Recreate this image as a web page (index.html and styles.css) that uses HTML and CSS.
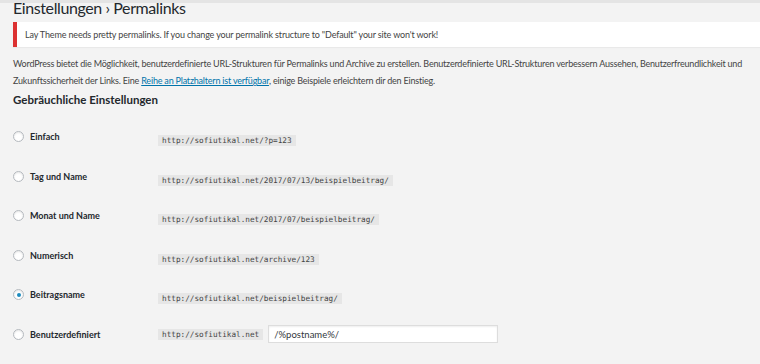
FILE: index.html
```html
<!DOCTYPE html>
<html lang="de">
<head>
    <meta charset="UTF-8">
    <title>Permalinks</title>
    <link rel="stylesheet" href="styles.css">
</head>
<body>
    <div class="topbar"></div>
    <div class="wrap">
        <h1>Einstellungen › Permalinks</h1>

        <div class="notice">Lay Theme needs pretty permalinks. If you change your permalink structure to "Default" your site won't work!</div>

        <p class="intro">WordPress bietet die Möglichkeit, benutzerdefinierte URL-Strukturen für Permalinks und Archive zu erstellen. Benutzerdefinierte URL-Strukturen verbessern Aussehen, Benutzerfreundlichkeit und Zukunftssicherheit der Links. Eine <a href="#">Reihe an Platzhaltern ist verfügbar</a>, einige Beispiele erleichtern dir den Einstieg.</p>

        <h2>Gebräuchliche Einstellungen</h2>

        <!-- Permalink-Optionen -->
        <div class="options">
            <div class="row">
                <label class="choice"><span class="radio"></span>Einfach</label>
                <div><code>http://sofiutikal.net/?p=123</code></div>
            </div>
            <div class="row">
                <label class="choice"><span class="radio"></span>Tag und Name</label>
                <div><code>http://sofiutikal.net/2017/07/13/beispielbeitrag/</code></div>
            </div>
            <div class="row">
                <label class="choice"><span class="radio"></span>Monat und Name</label>
                <div><code>http://sofiutikal.net/2017/07/beispielbeitrag/</code></div>
            </div>
            <div class="row">
                <label class="choice"><span class="radio"></span>Numerisch</label>
                <div><code>http://sofiutikal.net/archive/123</code></div>
            </div>
            <div class="row">
                <label class="choice"><span class="radio checked"></span>Beitragsname</label>
                <div><code>http://sofiutikal.net/beispielbeitrag/</code></div>
            </div>
            <div class="row">
                <label class="choice"><span class="radio"></span>Benutzerdefiniert</label>
                <div class="custom">
                    <code>http://sofiutikal.net</code>
                    <input type="text" value="/%postname%/">
                </div>
            </div>
        </div>
    </div>
</body>
</html>
```

FILE: styles.css
```css
/* Grundlayout */
body {
    margin: 0;
    background: #f3f3f3;
    font-family: 'Lato', sans-serif;
    color: #444;
    overflow: hidden;
}

.topbar {
    height: 3px;
    background: #e4e4e4;
}

.wrap {
    padding-left: 13px;
}

h1 {
    margin: 0;
    font-size: 16px;
    font-weight: 400;
    letter-spacing: -0.4px;
    line-height: 18px;
    color: #23282d;
    margin-top: -4px;
}

.notice {
    margin-top: 5px;
    height: 25px;
    line-height: 25px;
    padding-left: 8px;
    background: #fff;
    border-left: 4px solid #dc3232;
    box-shadow: 0 1px 1px rgba(0, 0, 0, 0.04);
    font-size: 9px;
    letter-spacing: -0.15px;
    color: #444;
}

.intro {
    margin: 8px 0 0;
    padding-right: 14px;
    font-size: 9px;
    letter-spacing: -0.2px;
    line-height: 17px;
}

.intro a {
    color: #0073aa;
}

h2 {
    margin: 3px 0 0;
    font-size: 11.5px;
    font-weight: 700;
    line-height: 16px;
    color: #23282d;
}

/* Optionen */
.options {
    margin-top: 9px;
}

.row {
    display: grid;
    grid-template-columns: 145px 1fr;
    align-items: center;
    height: 39.5px;
}

.choice {
    display: flex;
    align-items: center;
    font-size: 9px;
    font-weight: 700;
    color: #23282d;
}

.radio {
    width: 9px;
    height: 9px;
    margin-right: 6px;
    border: 1px solid #b4b9be;
    border-radius: 50%;
    background: #fff;
    box-shadow: inset 0 1px 2px rgba(0, 0, 0, 0.1);
    display: flex;
    align-items: center;
    justify-content: center;
}

.radio.checked::after {
    content: '';
    width: 4px;
    height: 4px;
    border-radius: 50%;
    background: #1e8cbe;
}

code {
    display: inline-block;
    padding: 0 4px;
    background: #e6e6e6;
    font-family: 'DejaVu Sans Mono', monospace;
    font-size: 7.7px;
    line-height: 11px;
    color: #444;
}

.custom {
    display: flex;
    align-items: center;
    gap: 5px;
}

.custom input {
    width: 230px;
    height: 18px;
    box-sizing: border-box;
    margin: 0;
    padding: 0 5px;
    border: 1px solid #ddd;
    background: #fff;
    box-shadow: inset 0 1px 2px rgba(0, 0, 0, 0.07);
    font-family: 'Lato', sans-serif;
    font-size: 9.5px;
    color: #32373c;
}
```
